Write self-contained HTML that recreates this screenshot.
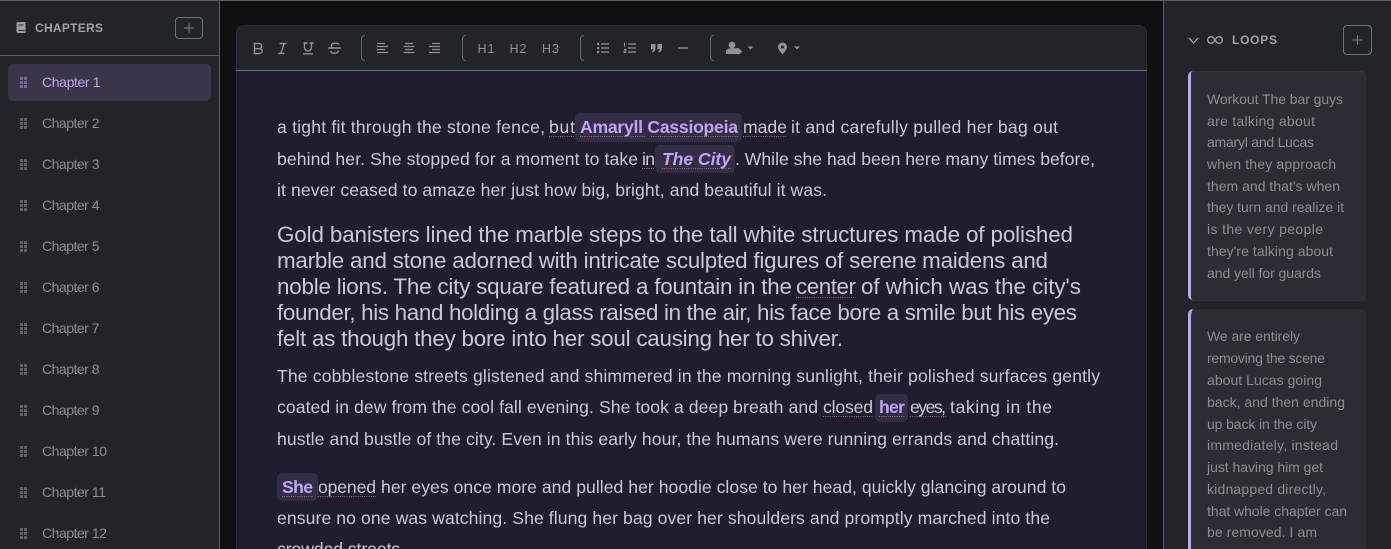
<!DOCTYPE html>
<html lang="en"><head><meta charset="utf-8"><title>Editor</title>
<style>
html,body{margin:0;padding:0;width:1391px;height:549px;overflow:hidden;background:#0f1011}
svg{display:block;position:absolute;left:0;top:0}
text{font-family:"Liberation Sans",sans-serif}
.ch{font-size:14px;fill:#8a8c8e}
.e{font-size:17.6px;fill:#c9c9cf}
.b{font-size:22.400px;fill:#c9c9cf}
.p{font-size:17.6px;fill:#c4a1f8;font-weight:700}
.l{font-size:14px;fill:#8b8d90}
.h{font-size:12px;fill:#a0a2a4;font-weight:700}
.t{font-size:12.5px;fill:#8f9194}
.u{stroke:#e0707c;stroke-width:1;stroke-dasharray:1 1.2;opacity:.8}
.g{fill:#8f9194}
.s{stroke:#8f9194;fill:none;stroke-width:1.4}
.sep{stroke:#5f666d;fill:none;stroke-width:1}
.th{stroke:#8f9194;fill:none;stroke-width:1.3}
</style></head><body>
<svg width="1391" height="549" viewBox="0 0 1391 549" xmlns="http://www.w3.org/2000/svg">
<rect width="1391" height="549" fill="#0f1011"/>
<!-- left sidebar -->
<rect width="219" height="549" fill="#212529"/>
<rect x="219" width="1" height="549" fill="#5c6064"/>
<rect width="1391" height="1" fill="#5c6064"/>
<rect y="55" width="219" height="1" fill="#5c6064"/>
<path d="M18 22h7.500v11h-7.500a1.500 1.500 0 0 1-1.500-1.500v-8a1.500 1.500 0 0 1 1.500-1.500z" fill="#9a9c9e"/>
<path d="M18.500 25h5M18.500 30.500h6" stroke="#212529" stroke-width="1"/>
<text class="h" x="35" y="32" textLength="68" lengthAdjust="spacing">CHAPTERS</text>
<rect x="175.500" y="17.500" width="27" height="21" rx="3.500" fill="none" stroke="#6c757d"/>
<path d="M189 23v10M184 28h10" stroke="#6c757d" stroke-width="1.200"/>
<rect x="8" y="64" width="203" height="37" rx="5" fill="#3a3548"/>
<g id="chapters">
<text class="ch" x="42" y="87" textLength="58.500" style="fill:#c4a1f8">Chapter 1</text>
<text class="ch" x="42" y="128" textLength="57.500">Chapter 2</text>
<text class="ch" x="42" y="169" textLength="57.500">Chapter 3</text>
<text class="ch" x="42" y="210" textLength="57.500">Chapter 4</text>
<text class="ch" x="42" y="251" textLength="57.500">Chapter 5</text>
<text class="ch" x="42" y="292" textLength="57.500">Chapter 6</text>
<text class="ch" x="42" y="333" textLength="57.500">Chapter 7</text>
<text class="ch" x="42" y="374" textLength="57.500">Chapter 8</text>
<text class="ch" x="42" y="415" textLength="57.500">Chapter 9</text>
<text class="ch" x="42" y="456" textLength="65">Chapter 10</text>
<text class="ch" x="42" y="497" textLength="64">Chapter 11</text>
<text class="ch" x="42" y="538" textLength="65">Chapter 12</text>
</g>
<defs><g id="grip"><rect x="20" y="77" width="3" height="3"/><rect x="24" y="77" width="3" height="3"/><rect x="20" y="81" width="3" height="3"/><rect x="24" y="81" width="3" height="3"/><rect x="20" y="85" width="3" height="3"/><rect x="24" y="85" width="3" height="3"/></g></defs>
<use href="#grip" fill="#7f659f"/>
<g fill="#5f6265">
<use href="#grip" y="41"/><use href="#grip" y="82"/><use href="#grip" y="123"/><use href="#grip" y="164"/><use href="#grip" y="205"/><use href="#grip" y="246"/><use href="#grip" y="287"/><use href="#grip" y="328"/><use href="#grip" y="369"/><use href="#grip" y="410"/><use href="#grip" y="451"/>
</g>
<!-- editor -->
<path d="M236 549V33a8 8 0 0 1 8-8h895a8 8 0 0 1 8 8v516z" fill="#1f1d2e"/>
<path d="M236 70V33a8 8 0 0 1 8-8h895a8 8 0 0 1 8 8v37z" fill="#212529"/>
<path d="M236.500 549V33a7.500 7.500 0 0 1 7.500-7.500h895a7.500 7.500 0 0 1 7.500 7.500v516" fill="none" stroke="#2d2c3a"/>
<rect x="236" y="70" width="911" height="1" fill="#66707a"/>
<!-- toolbar icons -->
<path class="s" d="M253.500 43.500h5.500a2.600 2.600 0 0 1 0 5.200h-4.500M254.500 43.500v9M254.500 48.700h5.300a2.400 2.400 0 0 1 0 4.800h-6.300"/>
<path class="s" d="M279.500 43.500h7M278 53.500h6.500M284 43.500l-3 10"/>
<path class="s" d="M303.500 43h4M309.500 43h4M304.500 43v4.500a3.500 3.500 0 0 0 7 0v-4.500M303 53.800h10"/>
<path class="s" d="M328 48h13M339 44.500c-1-1.500-6.500-2-7.500.5c-.5 1.500 .5 2.500 2 3M330.500 51c.8 2.800 7 3.200 8-.3"/>
<path class="sep" d="M365 35.500c-2.500 0-3.500 1.500-3.500 4v17c0 2.500 1 4 3.500 4"/>
<path class="th" d="M377 43.500h8M377 46.500h11M377 49.500h8M377 52.500h11"/>
<path class="th" d="M405 43.500h8M403.500 46.500h11M405 49.500h8M403.500 52.500h11"/>
<path class="th" d="M432 43.500h8M429 46.500h11M432 49.500h8M429 52.500h11"/>
<path class="sep" d="M466 35.500c-2.500 0-3.500 1.500-3.500 4v17c0 2.500 1 4 3.500 4"/>
<text class="t" x="477.500" y="53" textLength="17">H1</text>
<text class="t" x="509.500" y="53" textLength="17">H2</text>
<text class="t" x="542" y="53" textLength="17">H3</text>
<path class="sep" d="M584 35.500c-2.500 0-3.500 1.500-3.500 4v17c0 2.500 1 4 3.500 4"/>
<g class="g"><rect x="597" y="43" width="2.200" height="2.200"/><rect x="597" y="47" width="2.200" height="2.200"/><rect x="597" y="51" width="2.200" height="2.200"/></g>
<path class="th" d="M601 44h8M601 48h8M601 52h8"/>
<path class="s" style="stroke-width:.9" d="M624.500 42.500v3.500M624 46.200h1.500M624 49.500h2v1.500h-2v1.500h2.200"/>
<path class="th" d="M628 44h8M628 48h8M628 52h8"/>
<path class="g" d="M651 44h4.500v4c0 2.500-1.300 4-3.300 4.500l-.5-1c1-.5 1.500-1.200 1.500-2h-2.200zM657.500 44h4.500v4c0 2.500-1.300 4-3.300 4.500l-.5-1c1-.5 1.500-1.200 1.500-2h-2.200z"/>
<path d="M678 48h10" stroke="#8f9194" stroke-width="1.400"/>
<path class="sep" d="M714 35.500c-2.500 0-3.500 1.500-3.500 4v17c0 2.500 1 4 3.500 4"/>
<circle class="g" cx="732" cy="45" r="3.400"/>
<path class="g" d="M726 54v-1.500c0-2.800 2-4.200 4-4.200h4c1 0 1.500.2 2 .5l2 5.200z"/>
<path class="g" d="M735 48.500l3.500-.5 3.800 3.500-3.500 3.200-3.800-3.500z"/>
<path class="g" d="M747.500 46.500h6l-3 3z"/>
<path class="g" fill-rule="evenodd" d="M782.500 42.500a4.500 4.500 0 0 1 4.500 4.500c0 2.500-3 5.700-4.500 7.500c-1.500-1.800-4.500-5-4.500-7.500a4.500 4.500 0 0 1 4.500-4.500zm0 3a1.500 1.500 0 1 0 0 3a1.500 1.500 0 0 0 0-3z"/>
<path class="g" d="M794 46.500h6l-3 3z"/>
<!-- pills -->
<g fill="#322e44">
<rect x="575" y="113" width="167" height="29" rx="5"/>
<rect x="655" y="145" width="80" height="28" rx="5"/>
<rect x="875" y="394" width="33" height="28" rx="5"/>
<rect x="277" y="473" width="41" height="28" rx="5"/>
</g>
<!-- body text -->
<text class="e" x="277" y="133" textLength="268">a tight fit through the stone fence,</text>
<text class="e" x="549" y="133" textLength="26">but</text>
<text class="p" x="580" y="133" textLength="158">Amaryll Cassiopeia</text>
<text class="e" x="743" y="133" textLength="44">made</text>
<text class="e" x="791" y="133" textLength="267">it and carefully pulled her bag out</text>
<text class="e" x="277" y="165" textLength="361">behind her. She stopped for a moment to take</text>
<text class="e" x="642" y="165" textLength="13">in</text>
<text class="p" x="662" y="165" textLength="69" style="font-style:italic">The City</text>
<text class="e" x="735" y="165" textLength="360">. While she had been here many times before,</text>
<text class="e" x="277" y="196" textLength="550">it never ceased to amaze her just how big, bright, and beautiful it was.</text>
<text class="b" x="277" y="242" textLength="796">Gold banisters lined the marble steps to the tall white structures made of polished</text>
<text class="b" x="277" y="268" textLength="771">marble and stone adorned with intricate sculpted figures of serene maidens and</text>
<text class="b" x="277" y="294" textLength="515">noble lions. The city square featured a fountain in the</text>
<text class="b" x="796" y="294" textLength="60">center</text>
<text class="b" x="861" y="294" textLength="220">of which was the city's</text>
<text class="b" x="277" y="320" textLength="800">founder, his hand holding a glass raised in the air, his face bore a smile but his eyes</text>
<text class="b" x="277" y="346" textLength="566">felt as though they bore into her soul causing her to shiver.</text>
<text class="e" x="277" y="382" textLength="823">The cobblestone streets glistened and shimmered in the morning sunlight, their polished surfaces gently</text>
<text class="e" x="277" y="413" textLength="541">coated in dew from the cool fall evening. She took a deep breath and</text>
<text class="e" x="823" y="413" textLength="50">closed</text>
<text class="p" x="879" y="413" textLength="26">her</text>
<text class="e" x="910" y="413" textLength="36">eyes,</text>
<text class="e" x="950" y="413" textLength="102">taking in the</text>
<text class="e" x="277" y="445" textLength="782">hustle and bustle of the city. Even in this early hour, the humans were running errands and chatting.</text>
<text class="p" x="282" y="493" textLength="31">She</text>
<text class="e" x="318" y="493" textLength="58">opened</text>
<text class="e" x="381" y="493" textLength="685">her eyes once more and pulled her hoodie close to her head, quickly glancing around to</text>
<text class="e" x="277" y="524" textLength="773">ensure no one was watching. She flung her bag over her shoulders and promptly marched into the</text>
<text class="e" x="277" y="555" textLength="128">crowded streets.</text>
<g class="u">
<path d="M549 136.500h26M580 136.500h66M651 136.500h87M743 136.500h44M642 168.500h13M662 168.500h69M796 297.500h60M823 416.500h50M879 416.500h26M910 416.500h36M282 496.500h31M318 496.500h58"/>
</g>
<!-- right panel -->
<rect x="1163" width="228" height="549" fill="#212529"/>
<rect x="1163" width="1" height="549" fill="#5c6064"/>
<rect x="1163" width="228" height="1" fill="#5c6064"/>
<path d="M1189 38l4.500 5 4.500-5" fill="none" stroke="#a0a2a4" stroke-width="1.300"/>
<path d="M1215 40c-1.500-2.500-2.500-3.300-4-3.300a3.300 3.300 0 0 0 0 6.600c1.500 0 2.500-.8 4-3.300s2.500-3.300 4-3.300a3.300 3.300 0 0 1 0 6.600c-1.500 0-2.500-.8-4-3.300z" fill="none" stroke="#a0a2a4" stroke-width="1.300"/>
<text class="h" x="1232" y="44" textLength="45">LOOPS</text>
<rect x="1343.500" y="25.500" width="28" height="29" rx="3.500" fill="none" stroke="#6c757d"/>
<path d="M1357.500 35v10M1352.500 40h10" stroke="#6c757d" stroke-width="1.200"/>
<rect x="1188.500" y="71.500" width="177" height="229" rx="5" fill="#2a2d33" stroke="#32343c"/>
<path d="M1193 71a5 5 0 0 0-5 5v219a5 5 0 0 0 5 5c-1.500-.5-2-1.500-2-3v-223c0-1.500.5-2.500 2-3z" fill="#c4a1f8"/>
<path d="M1188.500 549V315a5 5 0 0 1 5-5h167a5 5 0 0 1 5 5v234z" fill="#2a2d33" stroke="#32343c"/>
<path d="M1193 309a5 5 0 0 0-5 5v235h3v-232c0-1.500.5-6 2-8z" fill="#c4a1f8"/>
<g>
<text class="l" x="1207" y="104" textLength="136">Workout The bar guys</text>
<text class="l" x="1207" y="126" textLength="108">are talking about</text>
<text class="l" x="1207" y="147" textLength="107">amaryl and Lucas</text>
<text class="l" x="1207" y="169" textLength="129">when they approach</text>
<text class="l" x="1207" y="191" textLength="133">them and that's when</text>
<text class="l" x="1207" y="212" textLength="137">they turn and realize it</text>
<text class="l" x="1207" y="234" textLength="116">is the very people</text>
<text class="l" x="1207" y="256" textLength="126">they're talking about</text>
<text class="l" x="1207" y="278" textLength="114">and yell for guards</text>
<text class="l" x="1207" y="341" textLength="93">We are entirely</text>
<text class="l" x="1207" y="363" textLength="118">removing the scene</text>
<text class="l" x="1207" y="385" textLength="115">about Lucas going</text>
<text class="l" x="1207" y="407" textLength="138">back, and then ending</text>
<text class="l" x="1207" y="429" textLength="110">up back in the city</text>
<text class="l" x="1207" y="450" textLength="131">immediately, instead</text>
<text class="l" x="1207" y="472" textLength="116">just having him get</text>
<text class="l" x="1207" y="494" textLength="119">kidnapped directly,</text>
<text class="l" x="1207" y="516" textLength="140">that whole chapter can</text>
<text class="l" x="1207" y="537" textLength="110">be removed. I am</text>
</g>
</svg>
</body></html>
